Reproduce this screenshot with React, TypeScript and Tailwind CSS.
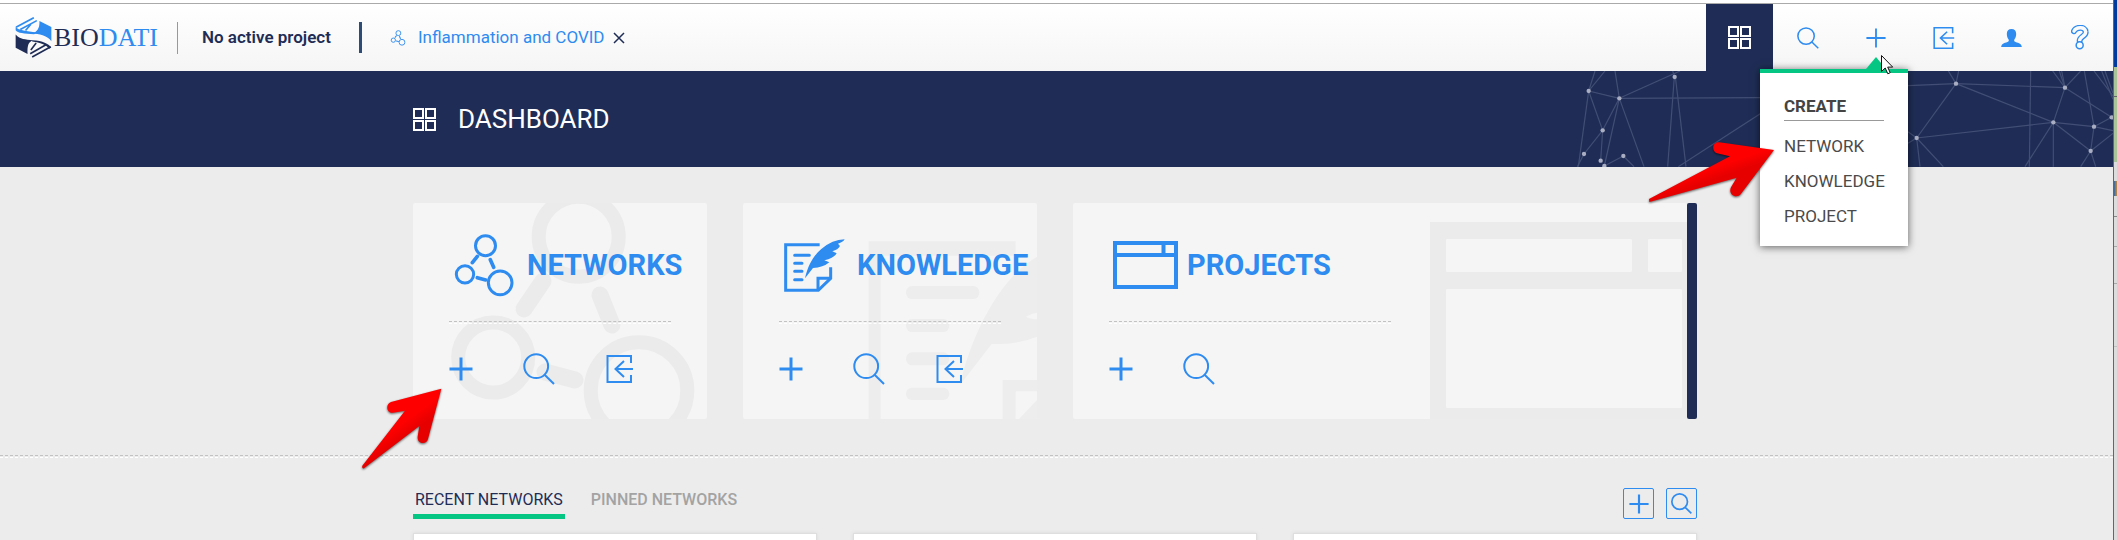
import type { ReactNode } from "react";

type IconProps = { className?: string; strokeWidth?: number };

function PlusIcon({ className, strokeWidth = 2 }: IconProps) {
  return (
    <svg viewBox="0 0 24 24" className={className} fill="none" stroke="currentColor" strokeWidth={strokeWidth} aria-hidden="true">
      <path d="M12 .5v23M.5 12h23" />
    </svg>
  );
}

function SearchIcon({ className, strokeWidth = 2 }: IconProps) {
  return (
    <svg viewBox="0 0 32 32" className={className} fill="none" stroke="currentColor" strokeWidth={strokeWidth} aria-hidden="true">
      <circle cx="13.2" cy="13.2" r="11.9" />
      <path d="M21.6 21.8 31 31" />
    </svg>
  );
}

function ImportIcon({ className, strokeWidth = 2 }: IconProps) {
  return (
    <svg viewBox="0 0 28 28" className={className} fill="none" stroke="currentColor" strokeWidth={strokeWidth} aria-hidden="true">
      <path d="M25 8V1H1.500v26H25v-7" />
      <path d="M27 14H9.500M18 6l-8.500 8 8.500 8" />
    </svg>
  );
}

function GridIcon({ className }: IconProps) {
  return (
    <svg viewBox="0 0 23 23" className={className} fill="none" stroke="currentColor" strokeWidth="2" aria-hidden="true">
      <rect x="1" y="1" width="9" height="9" />
      <rect x="13" y="1" width="9" height="9" />
      <rect x="1" y="13" width="9" height="9" />
      <rect x="13" y="13" width="9" height="9" />
    </svg>
  );
}

function UserIcon({ className }: IconProps) {
  return (
    <svg viewBox="0 0 62 54" className={className} fill="currentColor" aria-hidden="true">
      <path d="M31 0c9 0 14 5 14 14 0 7-2 13-5 17-2 4-1 7 3 8 11 3 18 6 19 15H0c1-9 8-12 19-15 4-1 5-4 3-8-3-4-5-10-5-17C17 5 22 0 31 0z" />
    </svg>
  );
}

function HelpIcon({ className }: IconProps) {
  return (
    <svg viewBox="0 0 54 74" className={className} fill="none" aria-hidden="true">
      <path d="M9 18C14 6 42 2 44 20c2 13-18 14-18 27" stroke="currentColor" strokeWidth="18" strokeLinecap="round" />
      <path d="M9 18C14 6 42 2 44 20c2 13-18 14-18 26" stroke="#fbfbfb" strokeWidth="10" strokeLinecap="round" />
      <circle cx="26" cy="60" r="10.500" fill="#fbfbfb" stroke="currentColor" strokeWidth="4.500" />
    </svg>
  );
}

function NetworkIcon({ className, strokeWidth = 9 }: IconProps) {
  return (
    <svg viewBox="160 125 186 195" className={className} fill="none" stroke="currentColor" strokeWidth={strokeWidth} aria-hidden="true">
      <circle cx="257.500" cy="163" r="30" />
      <circle cx="196" cy="249" r="26" />
      <circle cx="301.500" cy="274.500" r="35.500" />
      <g strokeWidth={strokeWidth + 2} strokeLinecap="round">
        <path d="M233 195l-15 19M272 205l10 23M233 259l25 7" />
      </g>
    </svg>
  );
}

function KnowledgeIcon({ className }: IconProps) {
  return (
    <svg viewBox="160 147 186 165" className={className} fill="none" stroke="currentColor" strokeWidth="9" aria-hidden="true">
      <path d="M270 167H168v137h98l37-36v-33" />
      <path d="M303 268h-38v36" />
      <path d="M195 199h44M195 223h22M195 247h22M195 272h22" strokeLinecap="round" />
      <path
        d="M226 268C236 225 252 200 275 180Q308 152 345 151Q340 160 325 164L331 171Q325 182 308 187L321 193Q312 208 284 214L299 220Q280 236 250 237Z"
        fill="currentColor"
        stroke="none"
      />
    </svg>
  );
}

function ProjectIcon({ className }: IconProps) {
  return (
    <svg viewBox="0 0 65 48" className={className} fill="none" stroke="currentColor" strokeWidth="4" aria-hidden="true">
      <path d="M2 2h61v44H2zM2 14h61M50.500 2v12" />
    </svg>
  );
}

function NetworkMark() {
  return (
    <svg viewBox="0 0 294 216" className="absolute inset-0 h-full w-full text-[#ebebeb]" fill="none" stroke="currentColor" strokeWidth="14" aria-hidden="true">
      <circle cx="165.700" cy="33.700" r="40" />
      <circle cx="80.200" cy="154.500" r="35" />
      <circle cx="226" cy="187.500" r="48.300" />
      <path d="M130 78l-19 28M187 92l12 30M132 169l30 8" strokeWidth="17" strokeLinecap="round" />
    </svg>
  );
}

function KnowledgeMark() {
  return (
    <svg viewBox="39 39 882 648" className="absolute inset-0 h-full w-full text-[#ededed]" aria-hidden="true">
      <g fill="currentColor">
        <path d="M416 154h441v43H452v490h-36z" />
        <rect x="528" y="288" width="220" height="39" rx="19" />
        <rect x="528" y="387" width="130" height="39" rx="19" />
        <rect x="528" y="487" width="130" height="39" rx="19" />
        <rect x="528" y="593" width="130" height="37" rx="18" />
        <path d="M690 585C720 450 800 270 921 200V368Q905 370 888 380Q900 387 921 388V440Q860 465 785 462Z" />
        <path d="M818 570h103v34h-64v83h-39zM921 630v57h-54z" />
      </g>
    </svg>
  );
}

function ProjectMark() {
  return (
    <svg viewBox="0 0 257 197" className="absolute right-0 bottom-0 h-[197px] w-[257px]" aria-hidden="true">
      <path d="M0 0h257v197H0z" fill="#ebebeb" />
      <g fill="#f5f5f5">
        <rect x="16" y="17" width="186" height="33" rx="1" />
        <rect x="218" y="17" width="34" height="33" rx="1" />
        <rect x="16" y="67" width="236" height="119" rx="1" />
      </g>
    </svg>
  );
}

function Logo() {
  return (
    <a href="#home" className="flex items-center gap-0.5" aria-label="BIODATI">
      <svg viewBox="45 50 110 124" className="h-[41px] w-[37px]" fill="none" aria-hidden="true">
        <g fill="#2e8bf0">
          <path d="M118 62l36 18v43c-14-18-36-22-60-23 16-4 25-14 24-38z" />
          <path d="M46 80c10 11 32 11 64 17l-8 5c-30-2-50-3-56-12z" />
        </g>
        <g fill="#1f2d56">
          <path d="M46 103c14 15 28 15 53 17-15 5-18 16-17 42l-36-19z" />
          <path d="M96 120c34 2 48 10 58 22l-7 4c-9-12-26-19-51-22z" />
        </g>
        <g stroke="#2e8bf0" strokeWidth="5">
          <path d="M47 81l54-29M60 88l50-27M76 91l16-19" />
        </g>
        <g stroke="#1f2d56" strokeWidth="5">
          <path d="M96 171l56-31M90 161l49-28M92 150l16-21" />
        </g>
      </svg>
      <span className="font-['Liberation_Serif',serif] text-[26px] leading-8 text-[#1f2d56]">
        BIO<span className="text-[#2e8bf0]">DATI</span>
      </span>
    </a>
  );
}

const meshLines: number[][] = [
  [56, 93, 75, 33], [56, 93, 105, 33], [56, 93, 148, 115], [56, 93, 25, 320], [56, 93, 98, 211],
  [148, 115, 135, 33], [148, 115, 330, 33], [148, 115, 570, 113], [148, 115, 98, 211], [148, 115, 222, 320],
  [148, 115, 103, 318], [98, 211, 42, 282], [98, 211, 92, 302], [42, 282, 22, 320], [103, 318, 160, 288],
  [160, 288, 192, 320], [308, 33, 314, 50], [313, 50, 293, 320], [316, 50, 348, 320], [325, 320, 650, 110],
  [1158, 71, 1135, 33], [1158, 71, 1166, 33], [1158, 71, 1014, 77], [1158, 71, 1485, 83], [1158, 71, 1040, 234],
  [1158, 71, 1450, 187], [1040, 234, 1450, 187], [1040, 234, 1014, 215], [1040, 234, 1014, 250], [1040, 234, 1050, 320],
  [1040, 234, 1120, 320], [1382, 33, 1378, 320], [1450, 187, 1485, 83], [1450, 187, 1572, 200], [1450, 187, 1365, 320],
  [1450, 187, 1450, 320], [1450, 187, 1562, 273], [1485, 83, 1448, 33], [1485, 83, 1468, 33], [1485, 83, 1475, 33],
  [1485, 83, 1532, 33], [1485, 83, 1625, 172], [1572, 200, 1625, 172], [1572, 200, 1629, 212], [1572, 200, 1543, 33],
  [1572, 200, 1562, 273], [1562, 273, 1629, 220], [1562, 273, 1532, 320], [1562, 273, 1577, 320], [1572, 33, 1629, 108],
  [1595, 33, 1629, 118], [1605, 33, 1629, 100],
];

const meshNodes: number[][] = [
  [56, 93], [148, 115], [98, 211], [42, 282], [92, 302], [103, 318], [160, 288], [314, 51],
  [1158, 71], [1040, 234], [1450, 187], [1485, 83], [1572, 200], [1562, 273], [1625, 172],
];

function Mesh() {
  return (
    <svg viewBox="0 33 1629 288" className="absolute top-0 right-0 h-24 w-[543px]" aria-hidden="true">
      <g stroke="#424e75" strokeWidth="3.500">
        {meshLines.map(([a, b, c, d], i) => (
          <line key={i} x1={a} y1={b} x2={c} y2={d} />
        ))}
      </g>
      <g fill="#a9aec2">
        {meshNodes.map(([x, y], i) => (
          <circle key={i} cx={x} cy={y} r="6.500" />
        ))}
      </g>
    </svg>
  );
}

function ArrowDefs({ id }: { id: string }) {
  return (
    <defs>
      <linearGradient id={id} x1="0.300" y1="0.200" x2="0.800" y2="0.900">
        <stop offset="0.350" stopColor="#ff0000" />
        <stop offset="0.550" stopColor="#e60000" />
      </linearGradient>
    </defs>
  );
}

function RightArrow() {
  return (
    <svg viewBox="234 240 384 180" className="pointer-events-none absolute top-[67px] -left-[112px] h-[60px] w-[128px] overflow-visible drop-shadow-[0_1px_1px_rgba(0,0,0,0.6)]" aria-hidden="true">
      <ArrowDefs id="arrow-right" />
      <path d="M612 270L448 247C426 245 424 274 441 280L480 289L237 417L238 426L500 353L483 382C473 404 500 418 513 401Z" fill="url(#arrow-right)" />
    </svg>
  );
}

function UpArrow() {
  return (
    <svg viewBox="33 50 246 252" className="pointer-events-none absolute top-[184px] -left-[52px] h-[84px] w-[82px] drop-shadow-[0_1px_1px_rgba(0,0,0,0.6)]" aria-hidden="true">
      <ArrowDefs id="arrow-up" />
      <path d="M274 55L123 95C105 102 110 129 128 127L165 121L37 286Q35 296 42 294L208 167L203 199C201 222 230 224 234 206Z" fill="url(#arrow-up)" />
    </svg>
  );
}

function Divider({ className = "" }: { className?: string }) {
  return <div className={`h-[3px] border-y border-dashed border-t-[#c2c2c2] border-b-white ${className}`} />;
}

const navButton = "flex h-full w-[67px] items-center justify-center text-[#2e8bf0]";

function CreateMenu() {
  return (
    <div className="absolute top-[65px] right-px z-20 w-[148px] border-t-4 border-[#05c783] bg-white px-6 pt-5 pb-3 text-[#4a4a4a] shadow-[0_1px_8px_rgba(0,0,0,0.6)]">
      <svg viewBox="0 0 20 12" className="absolute -top-4 left-[106px] h-3 w-5" aria-hidden="true">
        <path d="M0 12 10 0l10 12z" fill="#05c783" />
      </svg>
      <h2 className="border-b border-[#999] text-[17px] leading-[27px] font-bold text-[#444]">CREATE</h2>
      <ul className="flex flex-col pt-2 text-[17px] leading-[35px]">
        <li><a href="#network">NETWORK</a></li>
        <li><a href="#knowledge">KNOWLEDGE</a></li>
        <li><a href="#project">PROJECT</a></li>
      </ul>
      <RightArrow />
      <svg viewBox="0 0 12 19" className="absolute -top-[18px] left-[121px] h-[19px] w-3 overflow-visible" aria-hidden="true">
        <path d="M.5.5v16l3.700-3.500 2.600 5.800 2.400-1.100-2.500-5.600h5z" fill="#fff" stroke="#111" />
      </svg>
    </div>
  );
}

function Header() {
  return (
    <header className="flex h-[71px] items-stretch justify-between border-t-[3px] border-white bg-white">
      <div className="flex flex-1 items-center justify-between border-t border-[#aaa] bg-linear-to-b from-white to-[#f5f5f5]">
        <div className="flex items-center pl-[15px]">
          <Logo />
          <span className="ml-[19px] h-8 w-px bg-[#999]" />
          <span className="ml-6 text-[17px] font-semibold text-[#1f2d56]">No active project</span>
          <span className="ml-7 h-[31px] w-[3px] bg-[#2d4d78]" />
          <NetworkIcon className="ml-7 h-4 w-4 text-[#2e8bf0]" strokeWidth={11} />
          <a href="#inflammation" className="ml-3 text-[17px] text-[#2e8bf0]">Inflammation and COVID</a>
          <button type="button" aria-label="Close" className="ml-2 text-[#1f2d56]">
            <svg viewBox="0 0 12 12" className="h-3 w-3" stroke="currentColor" strokeWidth="1.500" aria-hidden="true">
              <path d="m1 1 10 10M11 1 1 11" />
            </svg>
          </button>
        </div>
        <nav className="flex h-full gap-px">
          <button type="button" aria-label="Dashboard" className="flex h-full w-[67px] items-center justify-center bg-[#1f2d56] text-white">
            <GridIcon className="h-[23px] w-[23px]" />
          </button>
          <button type="button" aria-label="Search" className={navButton}>
            <SearchIcon className="h-[22px] w-[22px]" strokeWidth={2.2} />
          </button>
          <div className="relative">
            <button type="button" aria-label="Create" className={navButton}>
              <PlusIcon className="h-5 w-5" strokeWidth={2.2} />
            </button>
            <CreateMenu />
          </div>
          <button type="button" aria-label="Import" className={navButton}>
            <ImportIcon className="h-[22px] w-[22px]" />
          </button>
          <button type="button" aria-label="Account" className={navButton}>
            <UserIcon className="h-[18px] w-[21px]" />
          </button>
          <button type="button" aria-label="Help" className={navButton}>
            <HelpIcon className="h-[25px] w-[18px]" />
          </button>
        </nav>
      </div>
    </header>
  );
}

type TileProps = { title: string; icon: ReactNode; mark: ReactNode; canImport?: boolean; className: string; dividerClass?: string };

function Tile({ title, icon, mark, canImport, className, dividerClass }: TileProps) {
  return (
    <section className={`relative h-[216px] overflow-hidden rounded-xs bg-[#f5f5f5] ${className}`}>
      {mark}
      <div className="relative px-9 text-[#2e8bf0]">
        <div className="flex h-[118px] items-center pt-1.5">
          <div className="flex w-[78px] shrink-0 pl-1">{icon}</div>
          <h2 className="text-[29px] leading-9 font-bold">{title}</h2>
        </div>
        <Divider className={dividerClass} />
        <div className="flex items-center pt-[29px]">
          <button type="button" aria-label={`Create ${title}`}>
            <PlusIcon className="h-6 w-6" strokeWidth={3} />
          </button>
          <button type="button" aria-label={`Search ${title}`} className="ml-[50px]">
            <SearchIcon className="h-8 w-8" strokeWidth={2} />
          </button>
          {canImport && (
            <button type="button" aria-label={`Import ${title}`} className="ml-[51px]">
              <ImportIcon className="h-7 w-7" />
            </button>
          )}
        </div>
      </div>
    </section>
  );
}

const panel = "h-40 flex-1 border border-[#dedede] bg-white shadow-[0_0_4px_rgba(0,0,0,0.08)]";
const boxButton = "flex h-[31px] w-[31px] items-center justify-center rounded-xs border border-[#2e8bf0] text-[#2e8bf0]";

export default function App() {
  return (
    <div className="flex h-screen overflow-hidden bg-[#ececec] font-[Roboto,sans-serif]">
      <div className="min-w-0 flex-1">
        <Header />
        <div className="relative h-24 bg-[#1f2d56] pr-[3px]">
          <Mesh />
          <div className="relative mx-auto flex h-full w-full max-w-[1284px] items-center gap-[22px] text-white">
            <GridIcon className="h-[23px] w-[23px]" />
            <h1 className="text-[26px] leading-8">DASHBOARD</h1>
          </div>
        </div>
        <main>
          <div className="pt-9 pr-[3px] pb-9">
            <div className="relative mx-auto flex w-full max-w-[1284px] gap-9">
              <Tile title="NETWORKS" className="w-[294px]" icon={<NetworkIcon className="h-[65px] w-[62px]" />} mark={<NetworkMark />} canImport />
              <Tile title="KNOWLEDGE" className="w-[294px]" icon={<KnowledgeIcon className="h-[55px] w-[62px]" />} mark={<KnowledgeMark />} canImport />
              <div className="flex flex-1">
                <Tile title="PROJECTS" className="flex-1" icon={<ProjectIcon className="h-12 w-[65px]" />} mark={<ProjectMark />} dividerClass="w-[282px]" />
                <div className="w-2.5 rounded-xs bg-[#1f2d56]" />
              </div>
              <UpArrow />
            </div>
          </div>
          <Divider />
          <div className="pt-[30px] pr-[3px]">
            <div className="mx-auto w-full max-w-[1284px]">
              <div className="flex items-start justify-between">
                <div className="flex gap-6 text-base leading-6">
                  <button type="button" className="border-b-5 border-[#05c783] px-0.5 pb-0.5 text-[#1f2d56]">RECENT NETWORKS</button>
                  <button type="button" className="border-b-5 border-transparent px-0.5 pb-0.5 font-medium text-[#a3a3a3]">PINNED NETWORKS</button>
                </div>
                <div className="flex gap-3">
                  <button type="button" aria-label="Add" className={boxButton}>
                    <PlusIcon className="h-5 w-5" strokeWidth={2.6} />
                  </button>
                  <button type="button" aria-label="Find" className={boxButton}>
                    <SearchIcon className="h-[21px] w-[21px]" strokeWidth={2.6} />
                  </button>
                </div>
              </div>
              <div className="mt-3.5 flex gap-9">
                <div className={panel} />
                <div className={panel} />
                <div className={panel} />
              </div>
            </div>
          </div>
        </main>
      </div>
      <aside className="flex w-1 flex-col border-l border-[#666] bg-[#dcdcdc]" aria-hidden="true">
        <div className="h-[67px] bg-[#003a9e]" />
        <div className="h-[30px] border-b border-[#666] bg-[#a8c498]" />
        <div className="h-[65px] bg-[#a8c498]" />
        <div className="mt-[19px] h-[15px] bg-linear-to-r from-[#2266a8] to-[#c98522]" />
        <div className="h-[21px] border-b border-[#888]" />
        <div className="h-[30px] border-b border-[#aaa]" />
        <div className="h-[37px] border-b border-[#aaa]" />
        <div className="h-[63px] border-b border-[#c2c2c2]" />
      </aside>
    </div>
  );
}
